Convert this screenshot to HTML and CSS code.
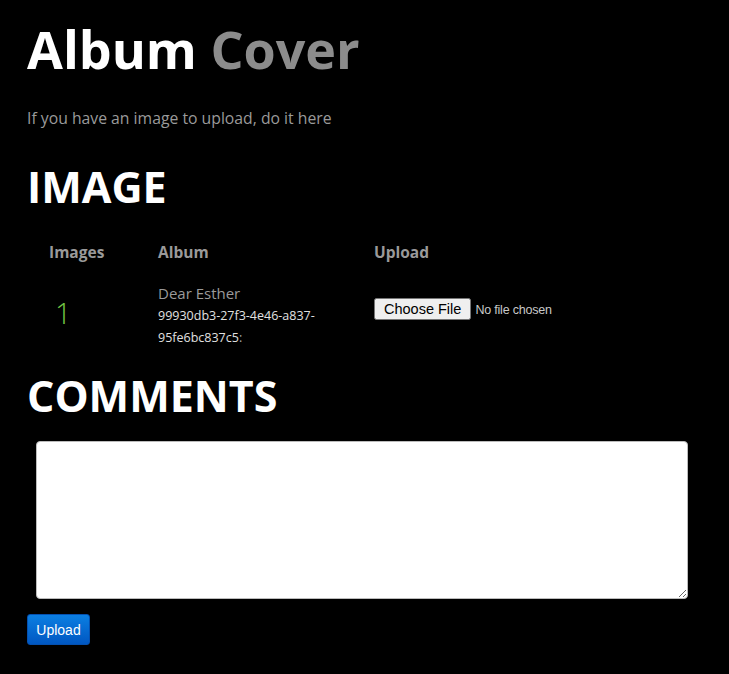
FILE: index.html
```html
<!DOCTYPE html>
<html>
<head>
<meta charset="utf-8">
<link rel="stylesheet" href="styles.css">
</head>
<body>
<div class="page">
  <h1 class="title">Album <span class="muted">Cover</span></h1>
  <p class="lead">If you have an image to upload, do it here</p>

  <h2 class="section">IMAGE</h2>
  <div class="table">
    <div class="th c1">Images</div>
    <div class="th c2">Album</div>
    <div class="th c3">Upload</div>
    <div class="td c1"><span class="count">1</span></div>
    <div class="td c2">
      <div class="album-name">Dear Esther</div>
      <div class="uuid">99930db3-27f3-4e46-a837-<br>95fe6bc837c5<span class="cut">:</span></div>
    </div>
    <div class="td c3"><input type="file" class="file"></div>
  </div>

  <h2 class="section comments">COMMENTS</h2>
  <div class="comment-box"><textarea class="textarea"></textarea></div>
  <button class="btn">Upload</button>
</div>
</body>
</html>
```

FILE: styles.css
```css
html, body {
  margin: 0;
  background: #000;
}
.page {
  padding: 0 27px;
  font-family: "Open Sans", "Liberation Sans", sans-serif;
  color: #fff;
}
.title {
  margin: 0;
  padding-top: 18px;
  font-size: 52px;
  font-weight: 700;
  line-height: 62px;
  letter-spacing: 0;
}
.muted {
  color: #8c8c8c;
}
.lead {
  margin: 28px 0 0;
  font-size: 15.75px;
  font-weight: 400;
  color: #9a9a9a;
  line-height: 20px;
}
.section {
  margin: 33px 0 0;
  font-size: 43px;
  font-weight: 700;
  line-height: 52px;
}
.table {
  display: grid;
  grid-template-columns: 109px 216px 1fr;
  margin-top: 29px;
}
.th {
  font-size: 15.5px;
  font-weight: 700;
  color: #9a9a9a;
  line-height: 20px;
  padding-bottom: 19px;
}
.c1 { padding-left: 22px; }
.c2 { padding-left: 22px; }
.c3 { padding-left: 22px; }
.td.c1 {
  display: flex;
  align-items: center;
  padding-left: 28px;
  padding-bottom: 6px;
}
.count {
  font-size: 29px;
  font-weight: 300;
  color: #74c644;
}
.album-name {
  font-size: 15px;
  font-weight: 400;
  color: #9a9a9a;
  line-height: 24px;
}
.uuid {
  font-size: 12.5px;
  color: #e0e0e0;
  line-height: 22px;
}
.cut {
  color: #aaa;
}
.td.c3 {
  padding-top: 16px;
}
.file {
  font-family: "Liberation Sans", Arial, sans-serif;
  font-size: 12.5px;
  color: #c8c8c8;
  letter-spacing: -0.2px;
}
.file::file-selector-button {
  font-family: "Liberation Sans", Arial, sans-serif;
  font-size: 14.5px;
  letter-spacing: 0;
  height: 22px;
  padding: 0 8px;
  margin-right: 4px;
}
.comments {
  margin-top: 21px;
}
.comment-box {
  margin-top: 19px;
  padding-left: 9px;
}
.textarea {
  display: block;
  box-sizing: border-box;
  width: 652px;
  height: 158px;
  background: #fff;
  border: 1px solid #bbb;
  border-radius: 4px;
  margin: 0;
}
.btn {
  display: block;
  margin-top: 15px;
  width: 63px;
  height: 31px;
  border: 1px solid #0450b0;
  border-radius: 3px;
  background: linear-gradient(#0b7fe2, #0057c2);
  color: #fff;
  font-family: "Liberation Sans", Arial, sans-serif;
  font-size: 14px;
  padding: 0;
}
```
